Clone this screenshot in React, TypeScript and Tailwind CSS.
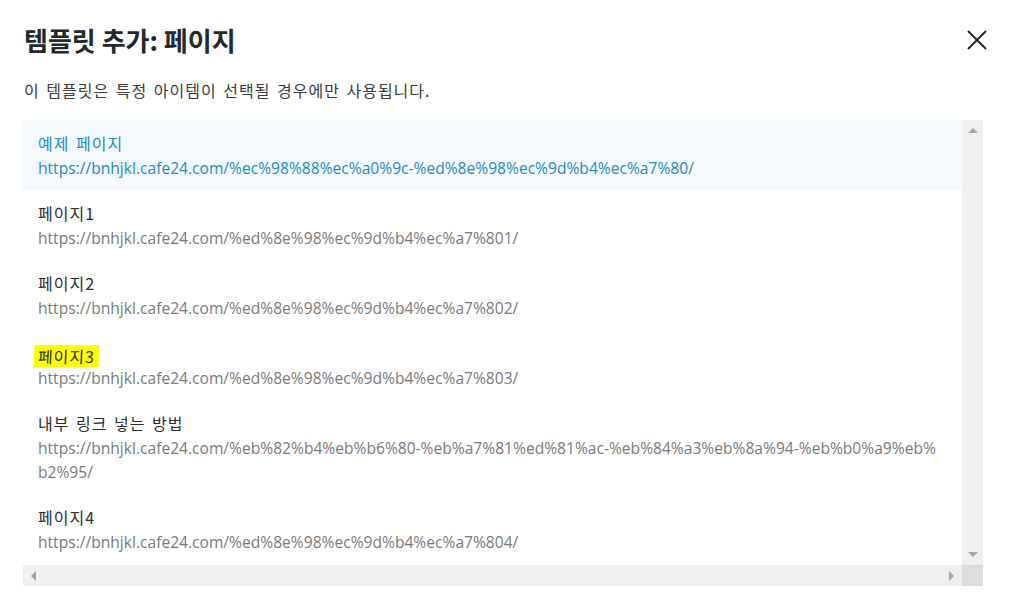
import React from "react";

const pages = [
  {
    title: "예제 페이지",
    url: "https://bnhjkl.cafe24.com/%ec%98%88%ec%a0%9c-%ed%8e%98%ec%9d%b4%ec%a7%80/",
    active: true,
  },
  { title: "페이지1", url: "https://bnhjkl.cafe24.com/%ed%8e%98%ec%9d%b4%ec%a7%801/" },
  { title: "페이지2", url: "https://bnhjkl.cafe24.com/%ed%8e%98%ec%9d%b4%ec%a7%802/" },
  { title: "페이지3", url: "https://bnhjkl.cafe24.com/%ed%8e%98%ec%9d%b4%ec%a7%803/", marked: true },
  {
    title: "내부 링크 넣는 방법",
    url: "https://bnhjkl.cafe24.com/%eb%82%b4%eb%b6%80-%eb%a7%81%ed%81%ac-%eb%84%a3%eb%8a%94-%eb%b0%a9%eb%b2%95/",
  },
  { title: "페이지4", url: "https://bnhjkl.cafe24.com/%ed%8e%98%ec%9d%b4%ec%a7%804/" },
];

const Arrow: React.FC<{ dir: "up" | "down" | "left" | "right" }> = ({ dir }) => {
  const pts = {
    up: "0,5 5,0 10,5",
    down: "0,0 10,0 5,5",
    left: "5,0 5,10 0,5",
    right: "0,0 5,5 0,10",
  }[dir];
  const vertical = dir === "up" || dir === "down";
  return (
    <svg width={vertical ? 10 : 5} height={vertical ? 5 : 10} viewBox={vertical ? "0 0 10 5" : "0 0 5 10"}>
      <polygon points={pts} fill="#a3a3a3" />
    </svg>
  );
};

export default function App() {
  return (
    <div className="w-[1011px] h-[609px] bg-white px-[23px] pt-[24px] font-['Open_Sans','Noto_Sans_CJK_KR',sans-serif] overflow-hidden">
      <div className="flex items-center justify-between h-[32px] pl-[1px]">
        <h1 className="text-[26px] font-bold text-[#23282d] leading-[32px] font-['Noto_Sans_CJK_KR',sans-serif]">
          템플릿 추가: 페이지
        </h1>
        <button className="w-[24px] h-[24px] flex items-center justify-center mr-[-1px]">
          <svg width="20" height="20" viewBox="0 0 20 20">
            <path d="M1 1L19 19M19 1L1 19" stroke="#222" strokeWidth="1.8" />
          </svg>
        </button>
      </div>
      <p className="mt-[22px] pl-[1px] text-[16px] leading-[24px] tracking-[1px] [word-spacing:2px] text-[#3c3c3c] font-['Noto_Sans_CJK_KR',sans-serif]">
        이 템플릿은 특정 아이템이 선택될 경우에만 사용됩니다.
      </p>
      <div className="mt-[18px] grid grid-cols-[939px_21px] grid-rows-[445px_21px] w-[960px]">
        <ul className="overflow-hidden">
          {pages.map((p) => (
            <li
              key={p.title}
              className={`pl-[15px] pr-[19px] pt-[11px] pb-[10px] flex flex-col gap-[1px] leading-[24px] ${p.active ? "bg-[#f3f9fc]" : ""}`}
            >
              <div
                className={`h-[24px] text-[16px] tracking-[1px] [word-spacing:2px] font-['Noto_Sans_CJK_KR',sans-serif] ${p.active ? "text-[#1e8cbe]" : "text-[#2c2c2c]"}`}
              >
                {p.marked ? (
                  <span className="bg-[#ffff00] px-[4px] ml-[-4px] leading-[22px] -skew-x-3 inline-block align-middle">
                    {p.title}
                  </span>
                ) : (
                  p.title
                )}
              </div>
              <div className={`text-[15.6px] break-all ${p.active ? "text-[#1e8cbe]" : "text-[#7a7a7a]"}`}>{p.url}</div>
            </li>
          ))}
        </ul>
        <div className="bg-[#f0f0f0] flex flex-col items-center justify-between py-[8px]">
          <Arrow dir="up" />
          <Arrow dir="down" />
        </div>
        <div className="bg-[#f0f0f0] flex items-center justify-between px-[8px]">
          <Arrow dir="left" />
          <Arrow dir="right" />
        </div>
        <div className="bg-[#dcdcdc]" />
      </div>
    </div>
  );
}
